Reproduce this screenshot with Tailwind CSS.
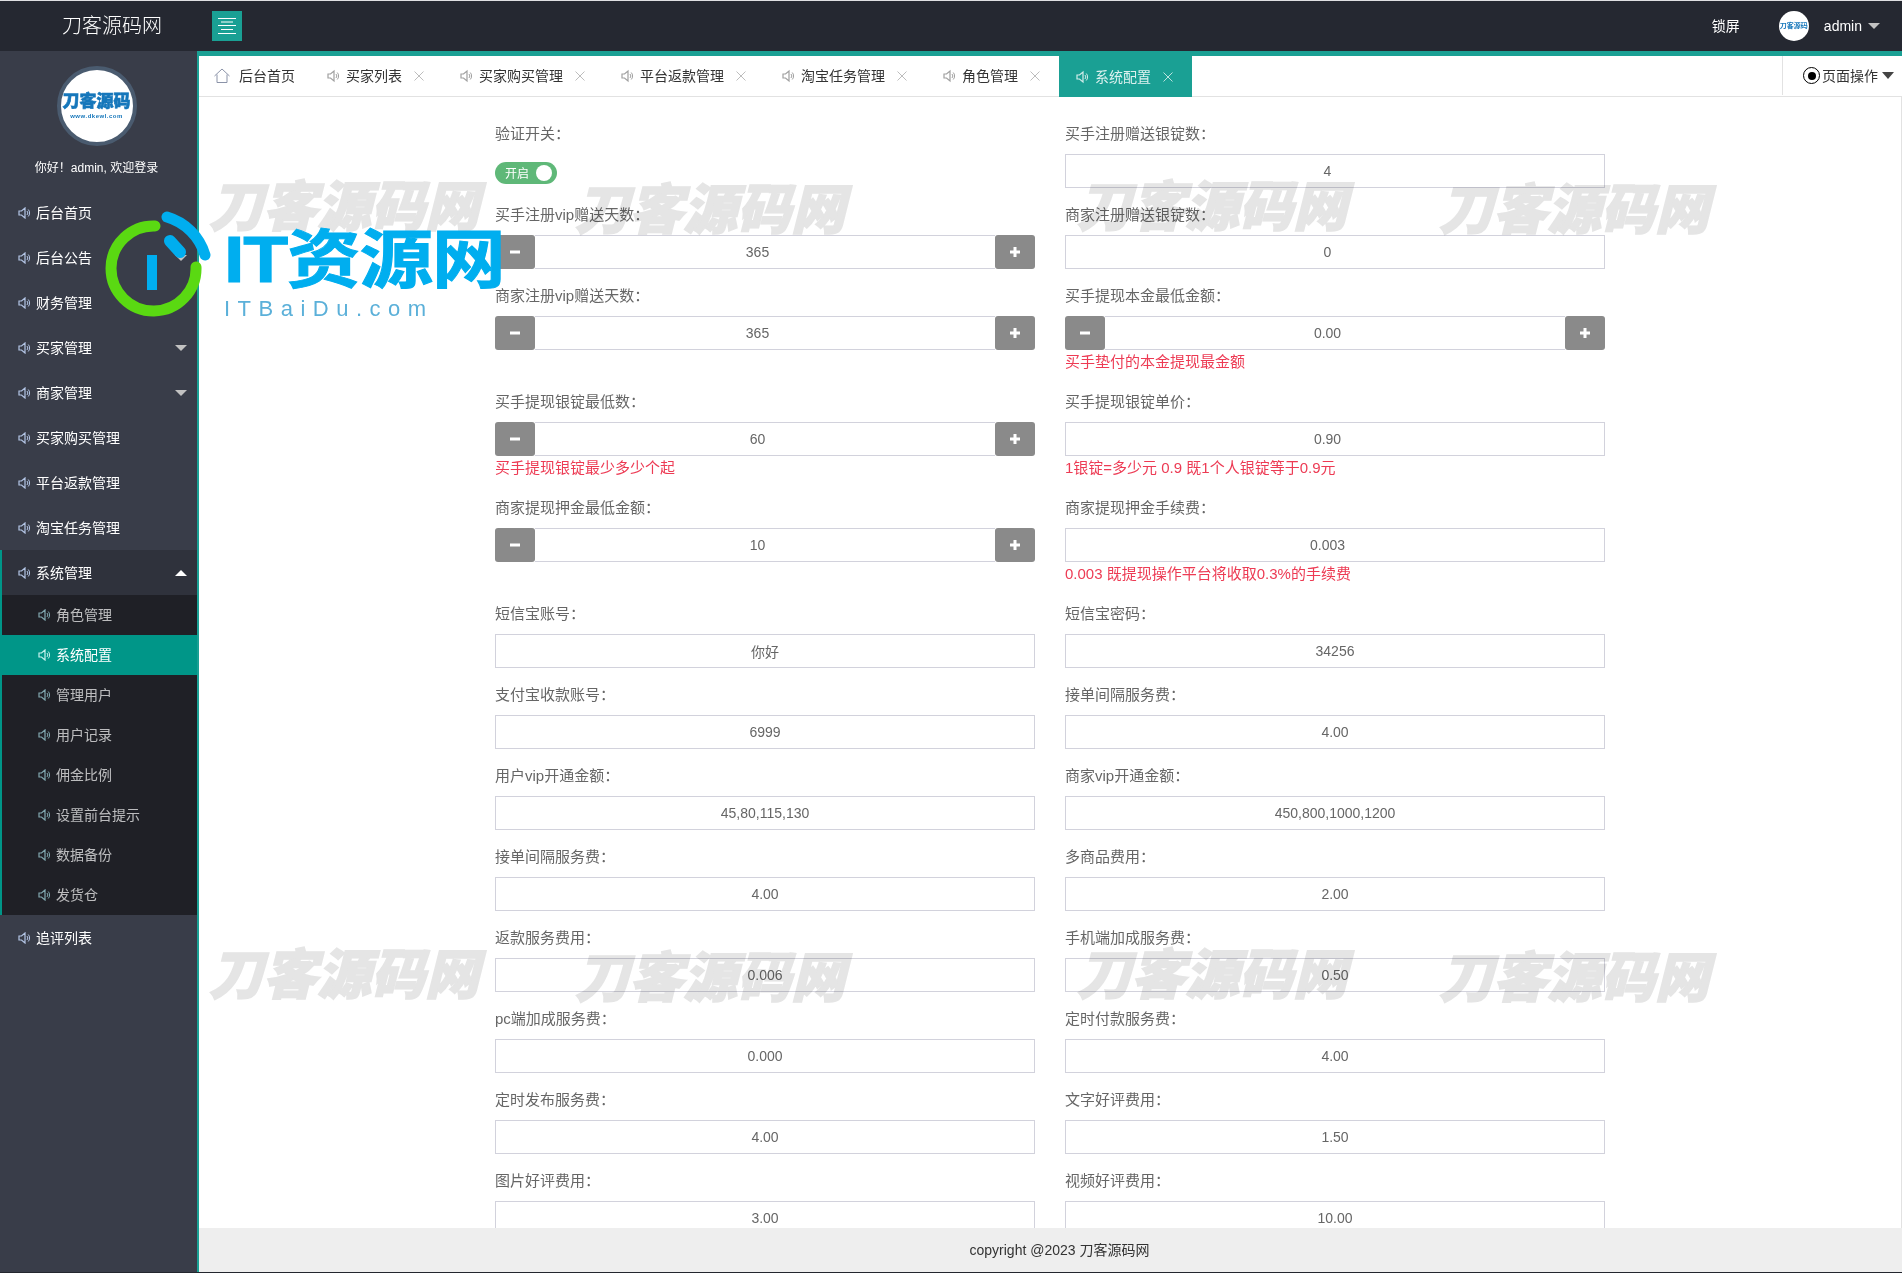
<!DOCTYPE html>
<html lang="zh-CN">
<head>
    <meta charset="UTF-8">
    <title>刀客源码网</title>
    <script src="https://cdn.jsdelivr.net/npm/@tailwindcss/browser@4"></script>
</head>
<body class="h-screen overflow-hidden flex flex-col bg-[#23262e] border-t border-t-[#dfe0e2] border-b border-b-[#23262e] font-['Liberation_Sans','Noto_Sans_CJK_SC',sans-serif] text-sm text-[#666]">
    <svg class="hidden">
        <symbol id="spk" viewBox="0 0 12 12"><path d="M1 4h2.500L7 1v10L3.500 8H1z" fill="none" stroke="currentColor" stroke-width="1.200"/><path d="M9 4a3 3 0 0 1 0 4M10.200 2.500a5 5 0 0 1 0 7" fill="none" stroke="currentColor"/></symbol>
        <symbol id="close" viewBox="0 0 10 10"><path d="M.5.5l9 9M9.500.5l-9 9" stroke="currentColor" fill="none"/></symbol>
        <symbol id="minus" viewBox="0 0 10 10"><rect y="3.500" width="10" height="3" fill="currentColor"/></symbol>
        <symbol id="plus" viewBox="0 0 10 10"><path d="M0 3.500h3.500V0h3v3.500H10v3H6.500V10h-3V6.500H0z" fill="currentColor"/></symbol>
    </svg>

    <!-- top bar -->
    <header class="h-[50px] shrink-0 flex items-center text-white bg-[#252831]">
        <div class="w-[212px] pl-[62px] text-[20px] font-light">刀客源码网</div>
        <button class="w-[30px] h-[30px] bg-[#1aa094] flex items-center justify-center">
            <svg width="18" height="16" viewBox="0 0 18 16" stroke="#fff"><path d="M0 .5h18M3 4h12M0 7.500h18M3 11.500h12M0 15.500h18"/></svg>
        </button>
        <div class="ml-auto flex items-center pr-[22px]">
            <span class="mr-[39px]">锁屏</span>
            <div class="w-[30px] h-[30px] rounded-full bg-white flex items-center justify-center mr-[15px] overflow-hidden text-[7px] font-bold text-[#1677bb]">刀客源码</div>
            <span>admin</span>
            <span class="ml-[6px] border-x-[6px] border-x-transparent border-t-[6px] border-t-[#c2c2c2]"></span>
        </div>
    </header>

    <div class="flex-1 min-h-0 flex">
        <!-- sidebar -->
        <aside class="w-[197px] shrink-0 bg-[#393d49] text-white">
            <div class="h-[139px] pr-[4px] flex flex-col items-center">
                <div class="mt-[15px] w-[80px] h-[80px] rounded-full bg-white border-4 border-[#4a5b6f] flex flex-col items-center justify-center text-[#1677bb]">
                    <span class="text-[17px] leading-[20px] font-black [-webkit-text-stroke:0.6px_#1677bb]">刀客源码</span>
                    <span class="text-[6px] leading-[8px] font-bold tracking-[.5px]">www.dkewl.com</span>
                </div>
                <p class="mt-[13px] text-xs leading-[18px]">你好！admin, 欢迎登录</p>
            </div>
            <nav>
                <a class="h-[45px] flex items-center pl-[18px] gap-[6px]"><svg class="w-[12px] h-[12px] text-[#b4c6e6]"><use href="#spk"/></svg>后台首页</a>
                <a class="h-[45px] flex items-center pl-[18px] gap-[6px]"><svg class="w-[12px] h-[12px] text-[#b4c6e6]"><use href="#spk"/></svg>后台公告<span class="ml-auto mr-[10px] border-x-[6px] border-x-transparent border-t-[6px] border-t-[#c2c2c2]"></span></a>
                <a class="h-[45px] flex items-center pl-[18px] gap-[6px]"><svg class="w-[12px] h-[12px] text-[#b4c6e6]"><use href="#spk"/></svg>财务管理</a>
                <a class="h-[45px] flex items-center pl-[18px] gap-[6px]"><svg class="w-[12px] h-[12px] text-[#b4c6e6]"><use href="#spk"/></svg>买家管理<span class="ml-auto mr-[10px] border-x-[6px] border-x-transparent border-t-[6px] border-t-[#c2c2c2]"></span></a>
                <a class="h-[45px] flex items-center pl-[18px] gap-[6px]"><svg class="w-[12px] h-[12px] text-[#b4c6e6]"><use href="#spk"/></svg>商家管理<span class="ml-auto mr-[10px] border-x-[6px] border-x-transparent border-t-[6px] border-t-[#c2c2c2]"></span></a>
                <a class="h-[45px] flex items-center pl-[18px] gap-[6px]"><svg class="w-[12px] h-[12px] text-[#b4c6e6]"><use href="#spk"/></svg>买家购买管理</a>
                <a class="h-[45px] flex items-center pl-[18px] gap-[6px]"><svg class="w-[12px] h-[12px] text-[#b4c6e6]"><use href="#spk"/></svg>平台返款管理</a>
                <a class="h-[45px] flex items-center pl-[18px] gap-[6px]"><svg class="w-[12px] h-[12px] text-[#b4c6e6]"><use href="#spk"/></svg>淘宝任务管理</a>
                <div class="border-l-2 border-[#009688]">
                    <a class="h-[45px] flex items-center pl-[16px] gap-[6px] bg-[#2f323c]"><svg class="w-[12px] h-[12px] text-[#b4c6e6]"><use href="#spk"/></svg>系统管理<span class="ml-auto mr-[10px] border-x-[6px] border-x-transparent border-b-[6px] border-b-white"></span></a>
                    <div class="bg-[#1f2026] text-white/70">
                        <a class="h-[40px] flex items-center pl-[36px] gap-[6px]"><svg class="w-[12px] h-[12px] text-[#82a8b0]"><use href="#spk"/></svg>角色管理</a>
                        <a class="h-[40px] flex items-center gap-[6px] -ml-[2px] pl-[38px] bg-[#009688] text-white"><svg class="w-[12px] h-[12px] text-[#c5f2ee]"><use href="#spk"/></svg>系统配置</a>
                        <a class="h-[40px] flex items-center pl-[36px] gap-[6px]"><svg class="w-[12px] h-[12px] text-[#82a8b0]"><use href="#spk"/></svg>管理用户</a>
                        <a class="h-[40px] flex items-center pl-[36px] gap-[6px]"><svg class="w-[12px] h-[12px] text-[#82a8b0]"><use href="#spk"/></svg>用户记录</a>
                        <a class="h-[40px] flex items-center pl-[36px] gap-[6px]"><svg class="w-[12px] h-[12px] text-[#82a8b0]"><use href="#spk"/></svg>佣金比例</a>
                        <a class="h-[40px] flex items-center pl-[36px] gap-[6px]"><svg class="w-[12px] h-[12px] text-[#82a8b0]"><use href="#spk"/></svg>设置前台提示</a>
                        <a class="h-[40px] flex items-center pl-[36px] gap-[6px]"><svg class="w-[12px] h-[12px] text-[#82a8b0]"><use href="#spk"/></svg>数据备份</a>
                        <a class="h-[40px] flex items-center pl-[36px] gap-[6px]"><svg class="w-[12px] h-[12px] text-[#82a8b0]"><use href="#spk"/></svg>发货仓</a>
                    </div>
                </div>
                <a class="h-[45px] flex items-center pl-[18px] gap-[6px]"><svg class="w-[12px] h-[12px] text-[#b4c6e6]"><use href="#spk"/></svg>追评列表</a>
            </nav>
        </aside>

        <!-- main -->
        <main class="flex-1 min-w-0 flex flex-col bg-white border-t-[5px] border-l-2 border-[#1aa094]">
            <div class="h-[41px] shrink-0 flex border-b border-[#e2e2e2] text-[#333]">
                <a class="w-[111px] pl-[15px] flex items-center gap-[9px]"><svg width="16" height="16" viewBox="0 0 16 16" fill="none" stroke="#8b93a8"><path d="M.5 8L8 1l7.500 7M3 6.500v8h10v-8"/></svg>后台首页</a>
                <a class="pl-[17px] pr-[19px] flex items-center"><svg class="w-[12px] h-[14px] mr-[7px] text-[#a0a0a0]"><use href="#spk"/></svg>买家列表<svg class="w-[10px] h-[10px] ml-[12px] text-[#bdbdbd]"><use href="#close"/></svg></a>
                <a class="pl-[17px] pr-[19px] flex items-center"><svg class="w-[12px] h-[14px] mr-[7px] text-[#a0a0a0]"><use href="#spk"/></svg>买家购买管理<svg class="w-[10px] h-[10px] ml-[12px] text-[#bdbdbd]"><use href="#close"/></svg></a>
                <a class="pl-[17px] pr-[19px] flex items-center"><svg class="w-[12px] h-[14px] mr-[7px] text-[#a0a0a0]"><use href="#spk"/></svg>平台返款管理<svg class="w-[10px] h-[10px] ml-[12px] text-[#bdbdbd]"><use href="#close"/></svg></a>
                <a class="pl-[17px] pr-[19px] flex items-center"><svg class="w-[12px] h-[14px] mr-[7px] text-[#a0a0a0]"><use href="#spk"/></svg>淘宝任务管理<svg class="w-[10px] h-[10px] ml-[12px] text-[#bdbdbd]"><use href="#close"/></svg></a>
                <a class="pl-[17px] pr-[19px] flex items-center"><svg class="w-[12px] h-[14px] mr-[7px] text-[#a0a0a0]"><use href="#spk"/></svg>角色管理<svg class="w-[10px] h-[10px] ml-[12px] text-[#bdbdbd]"><use href="#close"/></svg></a>
                <a class="pl-[17px] pr-[19px] -mb-px flex items-center bg-[#1aa094] text-white/85"><svg class="w-[12px] h-[14px] mr-[7px] text-white/80"><use href="#spk"/></svg>系统配置<svg class="w-[10px] h-[10px] ml-[12px] text-white/70"><use href="#close"/></svg></a>
                <div class="ml-auto w-[120px] border-l border-[#e2e2e2] flex items-center pl-[20px] gap-[3px] mb-[1px]">
                    <span class="w-[17px] h-[17px] rounded-full border border-black flex items-center justify-center shrink-0"><span class="w-[8px] h-[8px] rounded-full bg-black"></span></span>
                    <span class="-ml-[1px]">页面操作</span>
                    <span class="ml-[1px] border-x-[6px] border-x-transparent border-t-[7px] border-t-[#444]"></span>
                </div>
            </div>

            <!-- config form -->
            <div class="flex-1 min-h-0 overflow-hidden border-r border-[#e2e2e2] pt-[27px] pl-[296px]">
                <form class="grid grid-cols-[540px_540px] gap-x-[30px] items-start">
                    <div class="mb-[17px]">
                        <label class="block h-5 leading-5 mb-[10px] text-[15px]">验证开关：</label>
                        <div class="h-[34px] pt-[8px]">
                            <div class="w-[62px] h-[22px] rounded-full bg-[#5fb878] flex items-center pl-[10px] text-xs text-white"><span class="mt-[2px]">开启</span><span class="ml-auto mr-[5px] w-[16px] h-[16px] rounded-full bg-white"></span></div>
                        </div>
                    </div>
                    <div class="mb-[17px]">
                        <label class="block h-5 leading-5 mb-[10px] text-[15px]">买手注册赠送银锭数：</label>
                        <input value="4" class="w-full h-[34px] border border-[#d2d2dc] text-center pr-[15px]">
                    </div>

                    <div class="mb-[17px]">
                        <label class="block h-5 leading-5 mb-[10px] text-[15px]">买手注册vip赠送天数：</label>
                        <div class="flex h-[34px]"><button type="button" class="w-[40px] bg-[#8a8a8a] rounded-[3px] text-white flex items-center justify-center"><svg class="w-[10px] h-[10px]"><use href="#minus"/></svg></button><input value="365" class="min-w-0 flex-1 border-y border-[#d2d2dc] text-center pr-[15px]"><button type="button" class="w-[40px] bg-[#8a8a8a] rounded-[3px] text-white flex items-center justify-center"><svg class="w-[10px] h-[10px]"><use href="#plus"/></svg></button></div>
                    </div>
                    <div class="mb-[17px]">
                        <label class="block h-5 leading-5 mb-[10px] text-[15px]">商家注册赠送银锭数：</label>
                        <input value="0" class="w-full h-[34px] border border-[#d2d2dc] text-center pr-[15px]">
                    </div>

                    <div class="mb-[17px]">
                        <label class="block h-5 leading-5 mb-[10px] text-[15px]">商家注册vip赠送天数：</label>
                        <div class="flex h-[34px]"><button type="button" class="w-[40px] bg-[#8a8a8a] rounded-[3px] text-white flex items-center justify-center"><svg class="w-[10px] h-[10px]"><use href="#minus"/></svg></button><input value="365" class="min-w-0 flex-1 border-y border-[#d2d2dc] text-center pr-[15px]"><button type="button" class="w-[40px] bg-[#8a8a8a] rounded-[3px] text-white flex items-center justify-center"><svg class="w-[10px] h-[10px]"><use href="#plus"/></svg></button></div>
                    </div>
                    <div class="mb-[17px]">
                        <label class="block h-5 leading-5 mb-[10px] text-[15px]">买手提现本金最低金额：</label>
                        <div class="flex h-[34px]"><button type="button" class="w-[40px] bg-[#8a8a8a] rounded-[3px] text-white flex items-center justify-center"><svg class="w-[10px] h-[10px]"><use href="#minus"/></svg></button><input value="0.00" class="min-w-0 flex-1 border-y border-[#d2d2dc] text-center pr-[15px]"><button type="button" class="w-[40px] bg-[#8a8a8a] rounded-[3px] text-white flex items-center justify-center"><svg class="w-[10px] h-[10px]"><use href="#plus"/></svg></button></div>
                        <p class="h-[25px] leading-[24px] text-[15px] text-[#ed3b54]">买手垫付的本金提现最金额</p>
                    </div>

                    <div class="mb-[17px]">
                        <label class="block h-5 leading-5 mb-[10px] text-[15px]">买手提现银锭最低数：</label>
                        <div class="flex h-[34px]"><button type="button" class="w-[40px] bg-[#8a8a8a] rounded-[3px] text-white flex items-center justify-center"><svg class="w-[10px] h-[10px]"><use href="#minus"/></svg></button><input value="60" class="min-w-0 flex-1 border-y border-[#d2d2dc] text-center pr-[15px]"><button type="button" class="w-[40px] bg-[#8a8a8a] rounded-[3px] text-white flex items-center justify-center"><svg class="w-[10px] h-[10px]"><use href="#plus"/></svg></button></div>
                        <p class="h-[25px] leading-[24px] text-[15px] text-[#ed3b54]">买手提现银锭最少多少个起</p>
                    </div>
                    <div class="mb-[17px]">
                        <label class="block h-5 leading-5 mb-[10px] text-[15px]">买手提现银锭单价：</label>
                        <input value="0.90" class="w-full h-[34px] border border-[#d2d2dc] text-center pr-[15px]">
                        <p class="h-[25px] leading-[24px] text-[15px] text-[#ed3b54]">1银锭=多少元 0.9 既1个人银锭等于0.9元</p>
                    </div>

                    <div class="mb-[17px]">
                        <label class="block h-5 leading-5 mb-[10px] text-[15px]">商家提现押金最低金额：</label>
                        <div class="flex h-[34px]"><button type="button" class="w-[40px] bg-[#8a8a8a] rounded-[3px] text-white flex items-center justify-center"><svg class="w-[10px] h-[10px]"><use href="#minus"/></svg></button><input value="10" class="min-w-0 flex-1 border-y border-[#d2d2dc] text-center pr-[15px]"><button type="button" class="w-[40px] bg-[#8a8a8a] rounded-[3px] text-white flex items-center justify-center"><svg class="w-[10px] h-[10px]"><use href="#plus"/></svg></button></div>
                    </div>
                    <div class="mb-[17px]">
                        <label class="block h-5 leading-5 mb-[10px] text-[15px]">商家提现押金手续费：</label>
                        <input value="0.003" class="w-full h-[34px] border border-[#d2d2dc] text-center pr-[15px]">
                        <p class="h-[25px] leading-[24px] text-[15px] text-[#ed3b54]">0.003 既提现操作平台将收取0.3%的手续费</p>
                    </div>

                    <div class="mb-[17px]"><label class="block h-5 leading-5 mb-[10px] text-[15px]">短信宝账号：</label><input value="你好" class="w-full h-[34px] border border-[#d2d2dc] text-center"></div>
                    <div class="mb-[17px]"><label class="block h-5 leading-5 mb-[10px] text-[15px]">短信宝密码：</label><input value="34256" class="w-full h-[34px] border border-[#d2d2dc] text-center"></div>
                    <div class="mb-[17px]"><label class="block h-5 leading-5 mb-[10px] text-[15px]">支付宝收款账号：</label><input value="6999" class="w-full h-[34px] border border-[#d2d2dc] text-center"></div>
                    <div class="mb-[17px]"><label class="block h-5 leading-5 mb-[10px] text-[15px]">接单间隔服务费：</label><input value="4.00" class="w-full h-[34px] border border-[#d2d2dc] text-center"></div>
                    <div class="mb-[17px]"><label class="block h-5 leading-5 mb-[10px] text-[15px]">用户vip开通金额：</label><input value="45,80,115,130" class="w-full h-[34px] border border-[#d2d2dc] text-center"></div>
                    <div class="mb-[17px]"><label class="block h-5 leading-5 mb-[10px] text-[15px]">商家vip开通金额：</label><input value="450,800,1000,1200" class="w-full h-[34px] border border-[#d2d2dc] text-center"></div>
                    <div class="mb-[17px]"><label class="block h-5 leading-5 mb-[10px] text-[15px]">接单间隔服务费：</label><input value="4.00" class="w-full h-[34px] border border-[#d2d2dc] text-center"></div>
                    <div class="mb-[17px]"><label class="block h-5 leading-5 mb-[10px] text-[15px]">多商品费用：</label><input value="2.00" class="w-full h-[34px] border border-[#d2d2dc] text-center"></div>
                    <div class="mb-[17px]"><label class="block h-5 leading-5 mb-[10px] text-[15px]">返款服务费用：</label><input value="0.006" class="w-full h-[34px] border border-[#d2d2dc] text-center"></div>
                    <div class="mb-[17px]"><label class="block h-5 leading-5 mb-[10px] text-[15px]">手机端加成服务费：</label><input value="0.50" class="w-full h-[34px] border border-[#d2d2dc] text-center"></div>
                    <div class="mb-[17px]"><label class="block h-5 leading-5 mb-[10px] text-[15px]">pc端加成服务费：</label><input value="0.000" class="w-full h-[34px] border border-[#d2d2dc] text-center"></div>
                    <div class="mb-[17px]"><label class="block h-5 leading-5 mb-[10px] text-[15px]">定时付款服务费：</label><input value="4.00" class="w-full h-[34px] border border-[#d2d2dc] text-center"></div>
                    <div class="mb-[17px]"><label class="block h-5 leading-5 mb-[10px] text-[15px]">定时发布服务费：</label><input value="4.00" class="w-full h-[34px] border border-[#d2d2dc] text-center"></div>
                    <div class="mb-[17px]"><label class="block h-5 leading-5 mb-[10px] text-[15px]">文字好评费用：</label><input value="1.50" class="w-full h-[34px] border border-[#d2d2dc] text-center"></div>
                    <div class="mb-[17px]"><label class="block h-5 leading-5 mb-[10px] text-[15px]">图片好评费用：</label><input value="3.00" class="w-full h-[34px] border border-[#d2d2dc] text-center"></div>
                    <div class="mb-[17px]"><label class="block h-5 leading-5 mb-[10px] text-[15px]">视频好评费用：</label><input value="10.00" class="w-full h-[34px] border border-[#d2d2dc] text-center"></div>
                </form>
            </div>
            <footer class="h-[44px] shrink-0 bg-[#eeeeee] flex items-center justify-center pl-[18px] text-sm text-[#333]">copyright @2023 刀客源码网</footer>
        </main>
    </div>

    <!-- watermarks, laid over the page -->
    <div class="absolute left-[209px] top-[172px] text-[54px] leading-[70px] font-black italic text-[#e5e5e5] [-webkit-text-stroke:1.5px_#e5e5e5] mix-blend-multiply pointer-events-none whitespace-nowrap">刀客源码网</div>
    <div class="absolute left-[575px] top-[175px] text-[54px] leading-[70px] font-black italic text-[#e5e5e5] [-webkit-text-stroke:1.5px_#e5e5e5] mix-blend-multiply pointer-events-none whitespace-nowrap">刀客源码网</div>
    <div class="absolute left-[1077px] top-[172px] text-[54px] leading-[70px] font-black italic text-[#e5e5e5] [-webkit-text-stroke:1.5px_#e5e5e5] mix-blend-multiply pointer-events-none whitespace-nowrap">刀客源码网</div>
    <div class="absolute left-[1439px] top-[175px] text-[54px] leading-[70px] font-black italic text-[#e5e5e5] [-webkit-text-stroke:1.5px_#e5e5e5] mix-blend-multiply pointer-events-none whitespace-nowrap">刀客源码网</div>
    <div class="absolute left-[209px] top-[940px] text-[54px] leading-[70px] font-black italic text-[#e5e5e5] [-webkit-text-stroke:1.5px_#e5e5e5] mix-blend-multiply pointer-events-none whitespace-nowrap">刀客源码网</div>
    <div class="absolute left-[575px] top-[943px] text-[54px] leading-[70px] font-black italic text-[#e5e5e5] [-webkit-text-stroke:1.5px_#e5e5e5] mix-blend-multiply pointer-events-none whitespace-nowrap">刀客源码网</div>
    <div class="absolute left-[1077px] top-[940px] text-[54px] leading-[70px] font-black italic text-[#e5e5e5] [-webkit-text-stroke:1.5px_#e5e5e5] mix-blend-multiply pointer-events-none whitespace-nowrap">刀客源码网</div>
    <div class="absolute left-[1439px] top-[943px] text-[54px] leading-[70px] font-black italic text-[#e5e5e5] [-webkit-text-stroke:1.5px_#e5e5e5] mix-blend-multiply pointer-events-none whitespace-nowrap">刀客源码网</div>

    <!-- site badge over the sidebar edge -->
    <svg class="absolute left-[100px] top-[205px] pointer-events-none" width="115" height="115" viewBox="100 205 115 115" fill="none" stroke-linecap="round">
        <path d="M155 226A42.500 42.500 0 1 0 196 267" stroke="#5ad912" stroke-width="11"/>
        <path d="M167 217A56 56 0 0 1 205 255" stroke="#00aeef" stroke-width="11"/>
        <path d="M170 241L180 252" stroke="#00aeef" stroke-width="12"/>
        <rect x="147" y="255" width="10" height="35" fill="#00aeef"/>
    </svg>
    <div class="absolute left-[224px] top-[228px] origin-left scale-x-[1.15] text-[64px] leading-[64px] font-bold text-[#00aeef] [-webkit-text-stroke:1px_#00aeef] pointer-events-none whitespace-nowrap tracking-[-1px]">IT资源网</div>
    <div class="absolute left-[224px] top-[296px] text-[22px] leading-[26px] tracking-[7.500px] text-[#5bb0d9] pointer-events-none whitespace-nowrap">ITBaiDu.com</div>
</body>
</html>
